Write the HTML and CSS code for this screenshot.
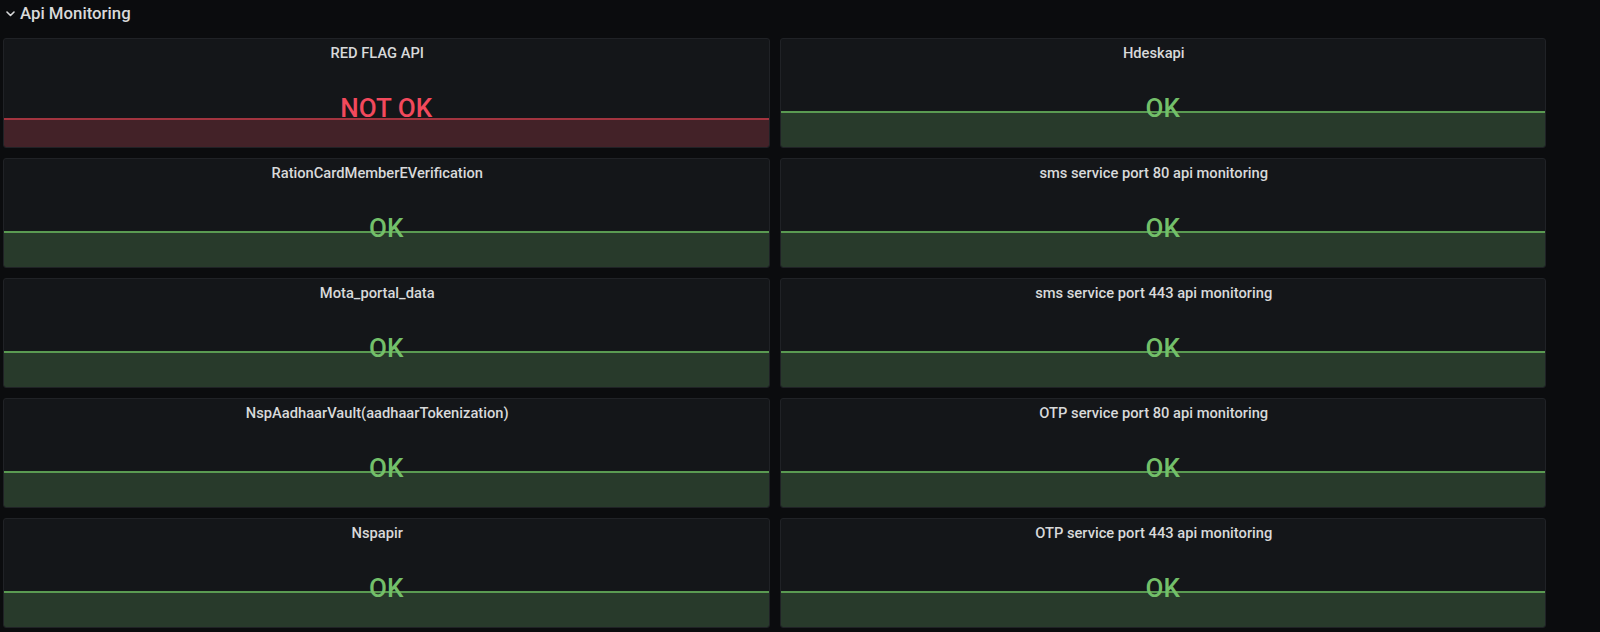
FILE: index.html
```html
<!DOCTYPE html>
<html lang="en">
<head>
<meta charset="utf-8">
<title>Api Monitoring</title>
<link rel="stylesheet" href="styles.css">
</head>
<body>
<div class="row-header">
  <svg class="chevron" width="9" height="6" viewBox="0 0 9 6"><path d="M1 1 L4.5 4.5 L8 1" fill="none" stroke="#d8d9da" stroke-width="1.6" stroke-linecap="round" stroke-linejoin="round"/></svg>
  <span class="row-title">Api Monitoring</span>
</div>
<div class="panels">
  <div class="panel bad">
    <div class="panel-title">RED FLAG API</div>
    <div class="panel-value">NOT OK</div>
    <div class="spark"></div>
  </div>
  <div class="panel good">
    <div class="panel-title">Hdeskapi</div>
    <div class="panel-value">OK</div>
    <div class="spark"></div>
  </div>
  <div class="panel good">
    <div class="panel-title">RationCardMemberEVerification</div>
    <div class="panel-value">OK</div>
    <div class="spark"></div>
  </div>
  <div class="panel good">
    <div class="panel-title">sms service port 80 api monitoring</div>
    <div class="panel-value">OK</div>
    <div class="spark"></div>
  </div>
  <div class="panel good">
    <div class="panel-title">Mota_portal_data</div>
    <div class="panel-value">OK</div>
    <div class="spark"></div>
  </div>
  <div class="panel good">
    <div class="panel-title">sms service port 443 api monitoring</div>
    <div class="panel-value">OK</div>
    <div class="spark"></div>
  </div>
  <div class="panel good">
    <div class="panel-title">NspAadhaarVault(aadhaarTokenization)</div>
    <div class="panel-value">OK</div>
    <div class="spark"></div>
  </div>
  <div class="panel good">
    <div class="panel-title">OTP service port 80 api monitoring</div>
    <div class="panel-value">OK</div>
    <div class="spark"></div>
  </div>
  <div class="panel good">
    <div class="panel-title">Nspapir</div>
    <div class="panel-value">OK</div>
    <div class="spark"></div>
  </div>
  <div class="panel good">
    <div class="panel-title">OTP service port 443 api monitoring</div>
    <div class="panel-value">OK</div>
    <div class="spark"></div>
  </div>
</div>
</body>
</html>
```

FILE: styles.css
```css
html, body {
  margin: 0;
  padding: 0;
  background: #0b0c0e;
  font-family: Roboto, "Liberation Sans", sans-serif;
  color: #d8d9da;
  height: 632px;
  overflow: hidden;
}

.row-header {
  height: 26px;
  display: flex;
  align-items: center;
  padding-left: 6px;
  gap: 5px;
  margin-bottom: 12px;
}

.chevron {
  display: block;
  margin-top: 2px;
}

.row-title {
  font-size: 16.8px;
  font-weight: 500;
  color: #d8d9da;
  line-height: 26px;
}

.panels {
  display: grid;
  grid-template-columns: 1fr 1fr;
  column-gap: 10px;
  row-gap: 10px;
  padding: 0 54px 0 3px;
}

.panel {
  position: relative;
  height: 110px;
  box-sizing: border-box;
  border: 1px solid #202226;
  border-radius: 3px;
  background: #141619;
  overflow: hidden;
}

.panel-title {
  padding: 6px 18px 0 0;
  font-size: 14.7px;
  line-height: 16px;
  font-weight: 500;
  text-align: center;
  color: #d8d9da;
}

.panel-value {
  position: relative;
  z-index: 1;
  margin-top: 32px;
  font-size: 26px;
  line-height: 30px;
  font-weight: 500;
  text-align: center;
}

.spark {
  position: absolute;
  left: 0;
  right: 0;
  bottom: 0;
  box-sizing: border-box;
}

.good .panel-value { color: #73bf69; }
.good .spark {
  height: 36px;
  background: #283a2b;
  border-top: 2px solid #5a9a52;
}

.bad .panel-value { color: #f2495c; }
.bad .spark {
  height: 29px;
  background: #432228;
  border-top: 2px solid #a3343f;
}
```
